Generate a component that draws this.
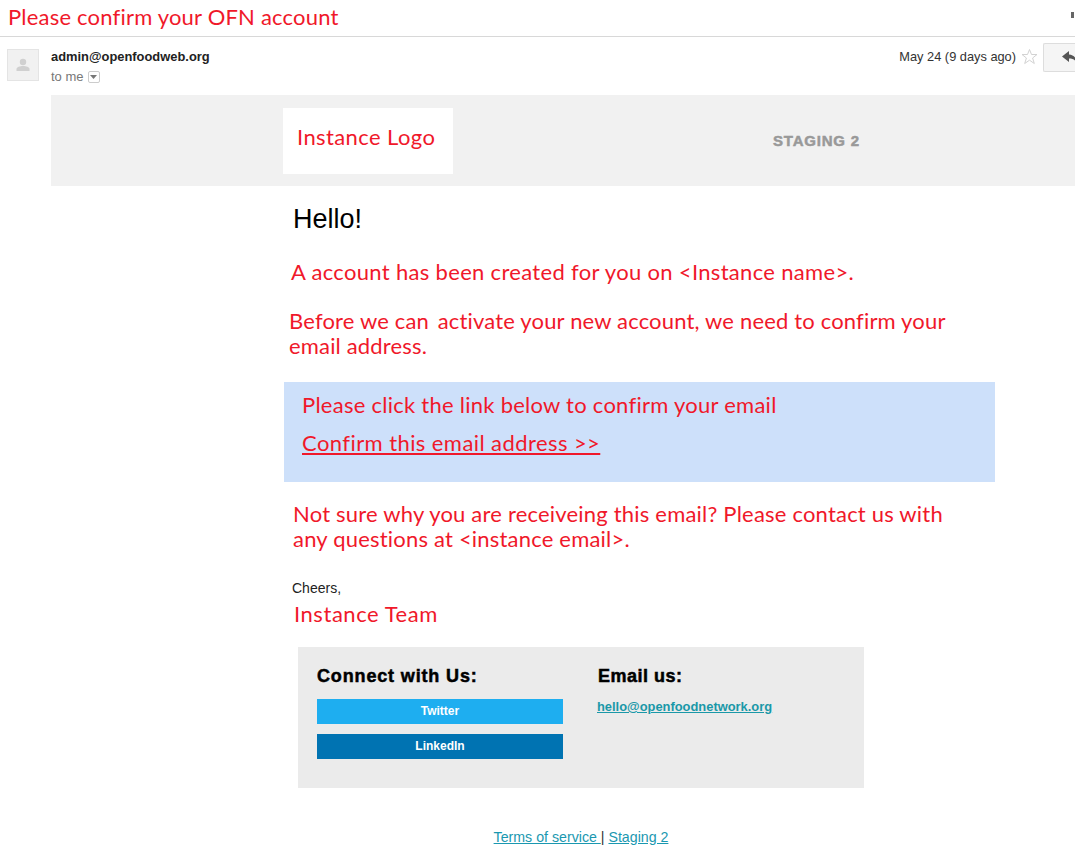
<div class="page">
  <header class="subject"><h1 class="red">Please confirm your OFN account</h1><span class="tick"></span></header>

  <section class="meta">
    <div class="avatar">
      <svg width="14" height="14" viewBox="0 0 14 14"><circle cx="7" cy="4" r="3.2" fill="#d0d0d0"/><path d="M0.5 13v-2c0-2 3.5-3 6.5-3s6.500 1 6.500 3v2z" fill="#d0d0d0"/></svg>
    </div>
    <div class="who">
      <div class="from">admin@openfoodweb.org</div>
      <div class="to">to me <span class="caret"><svg width="7" height="4" viewBox="0 0 7 4"><path d="M0 0h7L3.500 4z" fill="#777"/></svg></span></div>
    </div>
    <div class="right">
      <span class="date">May 24 (9 days ago)</span>
      <svg class="star" width="17" height="17" viewBox="0 0 17 17"><path d="M8.500 1.500l2 5h5.500l-4.400 3.500 1.700 5.500-4.800-3.300-4.800 3.300 1.700-5.500L1 6.500h5.500z" fill="none" stroke="#d2d2d2" stroke-width="1"/></svg>
      <div class="reply"><svg width="16" height="13" viewBox="0 0 16 13"><path d="M7 0L0 5.500 7 11V7.500c4 0 6.500 1.500 8 5 0-5-3-8.500-8-9z" fill="#555"/></svg></div>
    </div>
  </section>

  <main class="mail">
    <div class="banner">
      <div class="logo red">Instance Logo</div>
      <div class="staging">STAGING 2</div>
    </div>

    <div class="content">
      <h2 class="hello">Hello!</h2>
      <p class="red l1">A account has been created for you on &lt;Instance name&gt;.</p>
      <p class="red l2">Before we can&thinsp; activate your new account, we need to confirm your email address.</p>
      <div class="callout">
        <p class="red ask">Please click the link below to confirm your email</p>
        <a class="red confirm" href="#confirm">Confirm this email address &gt;&gt;</a>
      </div>
      <p class="red l3">Not sure why you are receiveing this email? Please contact us with any questions at &lt;instance email&gt;.</p>
      <div class="cheers">Cheers,</div>
      <p class="red team">Instance Team</p>

      <div class="social">
        <div class="col left">
          <h3>Connect with Us:</h3>
          <a class="btn tw" href="#twitter">Twitter</a>
          <a class="btn li" href="#linkedin">LinkedIn</a>
        </div>
        <div class="col">
          <h3 class="short">Email us:</h3>
          <a class="mailto" href="#mail">hello@openfoodnetwork.org</a>
        </div>
      </div>

      <div class="foot"><a href="#terms">Terms of service&nbsp;</a>| <a href="#staging">Staging 2</a></div>
    </div>
  </main>
</div>

<style>
  :global(body) { margin: 0; background: #fff; }
  .page { width: 1075px; height: 860px; overflow: hidden; font-family: "Liberation Sans", Arial, sans-serif; color: #222; }
  h1, h2, h3, p { margin: 0; font-weight: normal; }
  .red { font-family: Lato, "Liberation Sans", sans-serif; color: #f0182a; font-size: 22px; line-height: 25px; letter-spacing: .32px; }

  .subject { height: 36px; border-bottom: 1px solid #d8d8d8; display: flex; justify-content: space-between; padding: 0 0 0 8px; }
  .subject h1 { font-size: 22px; line-height: 34px; letter-spacing: .2px; }
  .tick { width: 3px; height: 6px; background: #666; margin: 12px 1px 0 0; }

  .meta { display: flex; height: 58px; padding-left: 7px; }
  .avatar { width: 30px; height: 30px; margin-top: 12px; background: #f1f1f1; border: 1px solid #e4e4e4; display: flex; align-items: center; justify-content: center; }
  .who { margin-left: 12px; padding-top: 11px; }
  .from { font-size: 12.9px; font-weight: bold; line-height: 17px; color: #222; }
  .to { font-size: 13px; line-height: 16px; margin-top: 4px; color: #777; display: flex; align-items: center; gap: 4px; }
  .caret { width: 10px; height: 10px; border: 1px solid #ccc; border-radius: 2px; display: flex; align-items: center; justify-content: center; }
  .right { margin-left: auto; display: flex; align-items: flex-start; }
  .date { font-size: 12.8px; line-height: 16px; color: #333; margin-top: 12px; }
  .star { margin: 11px 0 0 5px; }
  .reply { width: 32px; height: 29px; margin: 6px 0 0 5px; background: #f5f5f5; border: 1px solid #ddd; border-right: 0; border-radius: 2px 0 0 2px; padding: 7px 0 0 18px; box-sizing: border-box; }
  .reply svg { display: block; }

  .mail { margin-left: 51px; }
  .banner { height: 91px; background: #f1f1f1; display: flex; padding-left: 232px; }
  .logo { width: 170px; height: 66px; margin-top: 13px; background: #fff; padding: 16px 0 0 14px; box-sizing: border-box; letter-spacing: .4px; }
  .staging { margin: 38px 0 0 320px; font-size: 15px; line-height: 16px; font-weight: bold; letter-spacing: .8px; color: #999; -webkit-text-stroke: .5px #999; }

  .content { padding-left: 233px; width: 711px; }
  .hello { font-size: 27px; line-height: 30px; color: #000; margin: 18px 0 0 9px; }
  .l1 { margin: 25px 0 0 7px; }
  .l2 { margin: 24px 0 0 5px; width: 680px; letter-spacing: .17px; }
  .callout { background: #cde0fa; height: 100px; margin-top: 24px; padding: 10px 0 0 18px; box-sizing: border-box; }
  .ask { letter-spacing: .26px; }
  .confirm { display: block; margin-top: 13px; text-decoration: underline; letter-spacing: .42px; }
  .l3 { margin: 19px 0 0 9px; width: 670px; letter-spacing: .2px; }
  .cheers { margin: 29px 0 0 8px; font-size: 14px; line-height: 16px; color: #222; }
  .team { margin: 5px 0 0 10px; letter-spacing: .55px; }

  .social { width: 566px; height: 141px; margin: 21px 0 0 14px; background: #ebebeb; display: flex; padding: 19px 0 0 19px; box-sizing: border-box; }
  .col.left { width: 246px; margin-right: 35px; }
  h3 { font-size: 18px; line-height: 20px; font-weight: bold; color: #000; letter-spacing: .85px; -webkit-text-stroke: .5px #000; }
  h3.short { letter-spacing: .5px; }
  .btn { display: block; height: 25px; line-height: 24px; text-align: center; color: #fff; font-size: 12px; font-weight: bold; text-decoration: none; margin-top: 10px; }
  .btn.tw { background: #1eaef0; margin-top: 13px; }
  .btn.li { background: #0073b2; }
  .mailto { display: block; margin: 13px 0 0 -1px; font-size: 12.9px; font-weight: bold; color: #1a98a8; text-decoration: underline; }

  .foot { width: 566px; margin: 41px 0 0 14px; text-align: center; font-size: 14.2px; line-height: 16px; color: #333; }
  .foot a { color: #1a98b0; }
</style>
